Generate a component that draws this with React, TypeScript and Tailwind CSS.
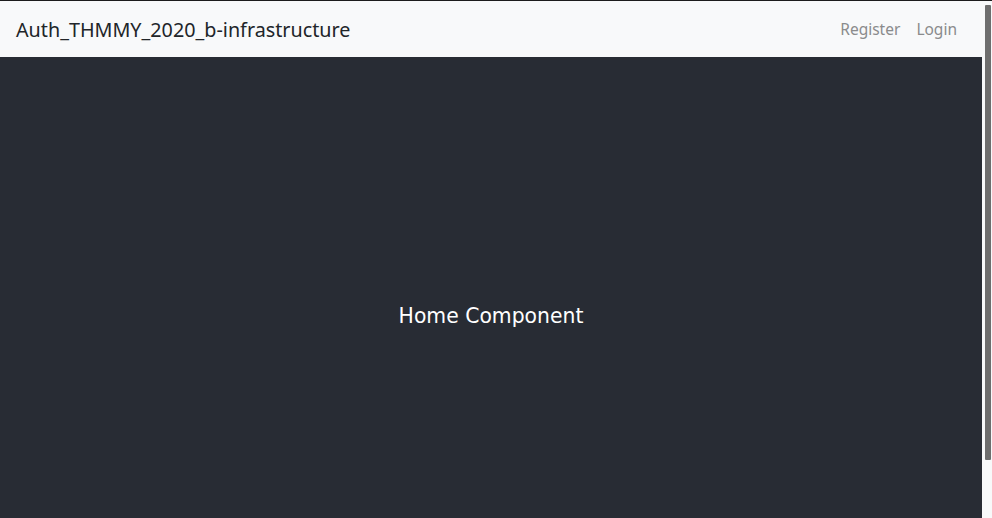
const App = () => {
  return (
    <div className="flex h-[518px] w-[992px] overflow-hidden border-t border-[#1c1c1c] bg-[#f8f9fa]">
      <div className="flex min-w-0 flex-1 flex-col">
        <nav className="flex h-[56px] shrink-0 items-center justify-between bg-[#f8f9fa] pl-4 pr-[25px] pt-[2px] font-['Noto_Sans',sans-serif]">
          <a className="text-[19.75px] text-[#212529]">Auth_THMMY_2020_b-infrastructure</a>
          <div className="flex gap-[16px] text-[15.5px] text-[#8a8b8c]">
            <a>Register</a>
            <a>Login</a>
          </div>
        </nav>
        <header className="flex min-h-[518px] shrink-0 items-center justify-center bg-[#282c34] font-['DejaVu_Sans',sans-serif] text-[20.36px] text-white">
          <p>Home Component</p>
        </header>
      </div>
      <div className="w-[10px] shrink-0 pl-[3px] pt-[4px]">
        <div className="h-[455px] w-[6px] rounded-[1px] bg-[#6e6e6e]" />
      </div>
    </div>
  );
};

export default App;
